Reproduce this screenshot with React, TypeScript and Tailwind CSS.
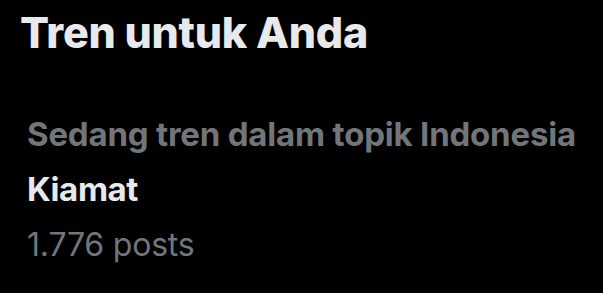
export default function App() {
  return (
    <div className="w-[603px] h-[293px] bg-black overflow-hidden" style={{ fontFamily: 'Inter, "Noto Sans", sans-serif' }}>
      <h2 className="pl-[20px] pt-[11px] text-[43px] leading-[43px] font-extrabold text-[#e7e9ea] tracking-[-0.3px]">Tren untuk Anda</h2>
      <div className="pl-[27px] pt-[64px] flex flex-col">
        <span className="text-[33px] leading-[33px] font-bold text-[#71767b] tracking-[-0.2px]">Sedang tren dalam topik Indonesia</span>
        <span className="mt-[22px] text-[33px] leading-[33px] font-bold text-[#e7e9ea] tracking-[-0.4px]">Kiamat</span>
        <span className="mt-[23px] text-[32px] leading-[32px] text-[#71767b] tracking-[-0.2px]">1.776 posts</span>
      </div>
    </div>
  )
}
